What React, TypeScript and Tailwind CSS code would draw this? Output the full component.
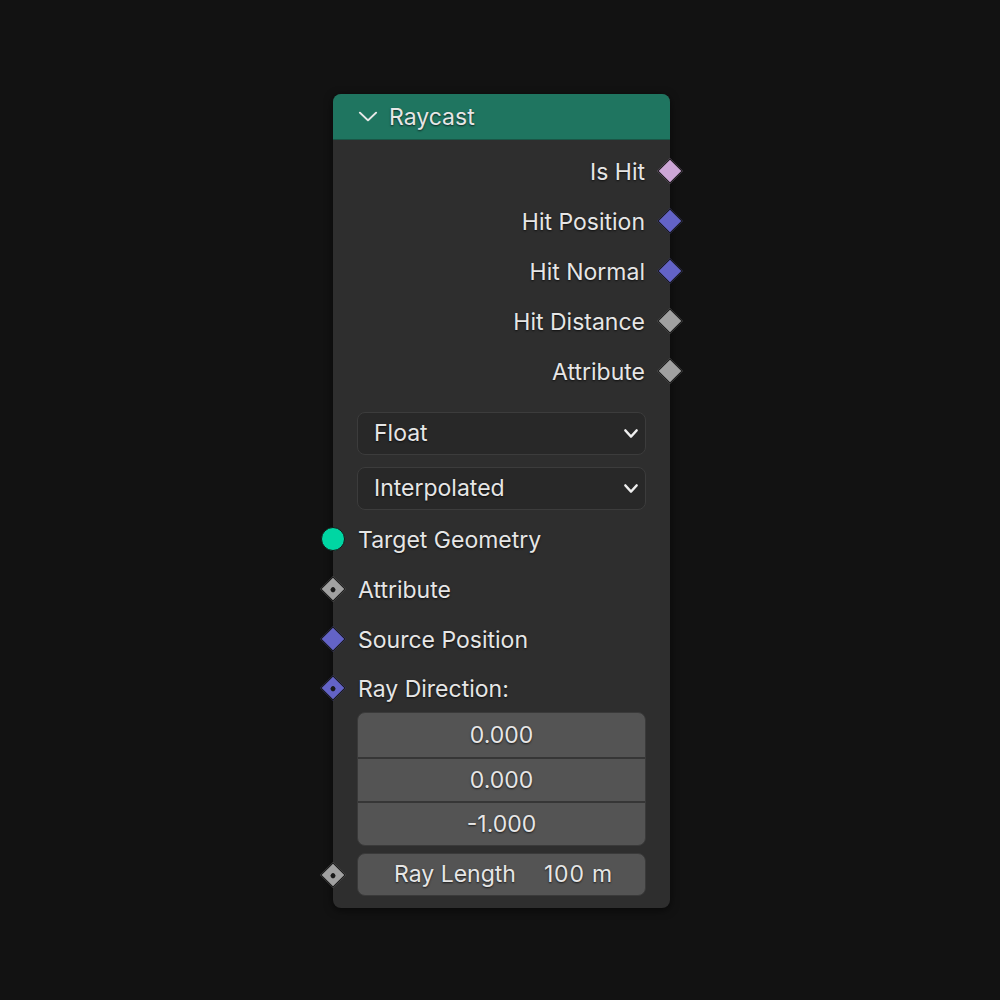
import React from 'react'

type SocketKind = 'bool' | 'vector' | 'float' | 'geometry'

const SOCKET_COLORS: Record<SocketKind, string> = {
  bool: 'bg-[#cca6d6]',
  vector: 'bg-[#6363c7]',
  float: 'bg-[#a1a1a1]',
  geometry: 'bg-[#00d6a3]',
}

function Socket({ kind, dot = false, side }: { kind: SocketKind; dot?: boolean; side: 'left' | 'right' }) {
  const pos = side === 'left' ? 'left-[-12px]' : 'right-[-12px]'
  if (kind === 'geometry') {
    return (
      <div className={`absolute ${pos} top-1/2 -translate-y-1/2 w-6 h-6 rounded-full border-[1.5px] border-[#161616] ${SOCKET_COLORS[kind]}`} />
    )
  }
  return (
    <div className={`absolute ${pos} top-1/2 -translate-y-1/2 w-6 h-6 flex items-center justify-center`}>
      <div className={`w-[18px] h-[18px] rotate-45 border-[1.5px] border-[#161616] flex items-center justify-center ${SOCKET_COLORS[kind]}`}>
        {dot && <div className="w-[5px] h-[5px] rounded-full bg-[#1a1a1a]" />}
      </div>
    </div>
  )
}

const label = 'text-[23px] text-[#e6e6e6] [text-shadow:0_1px_2px_rgba(0,0,0,0.7)]'

function OutputRow({ name, kind }: { name: string; kind: SocketKind }) {
  return (
    <div className="relative h-[50px] flex items-center justify-end pr-[25px] pt-[2px]">
      <span className={label}>{name}</span>
      <Socket kind={kind} side="right" />
    </div>
  )
}

function InputRow({ name, kind, dot, h = 'h-[50px]' }: { name: string; kind: SocketKind; dot?: boolean; h?: string }) {
  return (
    <div className={`relative ${h} flex items-center pl-[25px] pt-[2px]`}>
      <span className={label}>{name}</span>
      <Socket kind={kind} dot={dot} side="left" />
    </div>
  )
}

function Chevron({ className, width = 2 }: { className: string; width?: number }) {
  return (
    <svg viewBox="0 0 16 10" className={className} fill="none" stroke="currentColor" strokeWidth={width} strokeLinecap="round" strokeLinejoin="round" preserveAspectRatio="none">
      <path d="M1.5 1.5 L8 8.5 L14.5 1.5" />
    </svg>
  )
}

function Dropdown({ value }: { value: string }) {
  return (
    <div className="h-[43px] mx-6 rounded-lg bg-[#282828] border border-[#3c3c3c] flex items-center justify-between pl-4 pr-[7px]">
      <span className={label}>{value}</span>
      <Chevron className="w-[14px] h-[9px] text-[#eeeeee]" width={2.6} />
    </div>
  )
}

export default function App() {
  return (
    <div className="min-h-screen w-full bg-[#121212] flex justify-center pt-[94px] pl-[3px]" style={{ fontFamily: 'Inter, "Noto Sans", sans-serif' }}>
      <div className="w-[337px] h-[814px] rounded-lg bg-[#2e2e2e] shadow-[0_2px_8px_rgba(0,0,0,0.6)] flex flex-col">
        {/* Header */}
        <div className="h-[46px] rounded-t-lg bg-[#1f7560] flex items-center pl-[25px] gap-[11px] border-b border-[#1a5646]">
          <Chevron className="w-[20px] h-[11px] text-[#e8e8e8]" width={1.6} />
          <span className={`${label} pt-[1px]`}>Raycast</span>
        </div>

        <div className="pt-[6px] flex flex-col">
          <OutputRow name="Is Hit" kind="bool" />
          <OutputRow name="Hit Position" kind="vector" />
          <OutputRow name="Hit Normal" kind="vector" />
          <OutputRow name="Hit Distance" kind="float" />
          <OutputRow name="Attribute" kind="float" />
        </div>

        <div className="mt-4 flex flex-col gap-3">
          <Dropdown value="Float" />
          <Dropdown value="Interpolated" />
        </div>

        <div className="mt-1 flex flex-col">
          <InputRow name="Target Geometry" kind="geometry" />
          <InputRow name="Attribute" kind="float" dot />
          <InputRow name="Source Position" kind="vector" />
          <InputRow name="Ray Direction:" kind="vector" dot h="h-[48px]" />
        </div>

        <div className="mx-6 rounded-lg bg-[#545454] border border-[#3a3a3a] flex flex-col overflow-hidden">
          {['0.000', '0.000', '-1.000'].map((v, i) => (
            <div key={i} className={`h-[44px] flex items-center justify-center ${i > 0 ? 'border-t-2 border-[#363636]' : ''}`}>
              <span className={label}>{v}</span>
            </div>
          ))}
        </div>

        <div className="relative mt-[7px]">
          <div className="mx-6 h-[43px] rounded-lg bg-[#545454] border border-[#3a3a3a] flex items-center justify-center gap-7 pl-1">
            <span className={label}>Ray Length</span>
            <span className={`${label} tracking-[0.8px]`}>100 m</span>
          </div>
          <Socket kind="float" dot side="left" />
        </div>
      </div>
    </div>
  )
}
